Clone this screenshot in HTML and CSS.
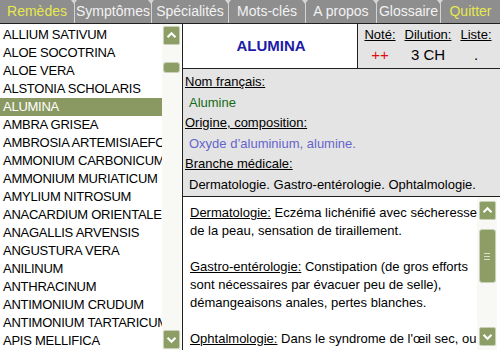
FILE: index.html
```html
<!DOCTYPE html>
<html lang="fr">
<head>
<meta charset="utf-8">
<title>Remèdes</title>
<link rel="stylesheet" href="styles.css">
</head>
<body>
<div class="app">
  <nav class="tabs">
    <div class="tab active">Remèdes</div>
    <div class="tab sep">Symptômes</div>
    <div class="tab sep">Spécialités</div>
    <div class="tab sep">Mots-clés</div>
    <div class="tab sep">A propos</div>
    <div class="tab sep">Glossaire</div>
    <div class="tab sep active">Quitter</div>
  </nav>
  <div class="main">
    <div class="list-panel">
      <ul class="list">
        <li>ALLIUM SATIVUM</li>
        <li>ALOE SOCOTRINA</li>
        <li>ALOE VERA</li>
        <li>ALSTONIA SCHOLARIS</li>
        <li class="selected">ALUMINA</li>
        <li>AMBRA GRISEA</li>
        <li>AMBROSIA ARTEMISIAEFOLIA</li>
        <li>AMMONIUM CARBONICUM</li>
        <li>AMMONIUM MURIATICUM</li>
        <li>AMYLIUM NITROSUM</li>
        <li>ANACARDIUM ORIENTALE</li>
        <li>ANAGALLIS ARVENSIS</li>
        <li>ANGUSTURA VERA</li>
        <li>ANILINUM</li>
        <li>ANTHRACINUM</li>
        <li>ANTIMONIUM CRUDUM</li>
        <li>ANTIMONIUM TARTARICUM</li>
        <li>APIS MELLIFICA</li>
      </ul>
      <div class="scrollbar list-scroll">
        <div class="sbtn"><svg viewBox="0 0 17 19" width="17" height="19"><path d="M4 11.5 L8.5 7 L13 11.5" fill="none" stroke="#fff" stroke-width="2.4"/></svg></div>
        <div class="thumb small"></div>
        <div class="track"></div>
        <div class="sbtn"><svg viewBox="0 0 17 19" width="17" height="19"><path d="M4 7.5 L8.5 12 L13 7.5" fill="none" stroke="#fff" stroke-width="2.4"/></svg></div>
      </div>
    </div>
    <div class="detail">
      <div class="head">
        <div class="name">ALUMINA</div>
        <div class="meta">
          <div class="col"><span class="lbl">Noté:</span><span class="val red">++</span></div>
          <div class="col"><span class="lbl">Dilution:</span><span class="val">3 CH</span></div>
          <div class="col"><span class="lbl">Liste:</span><span class="val">.</span></div>
        </div>
      </div>
      <div class="info">
        <div class="lbl">Nom français:</div>
        <div class="v green">Alumine</div>
        <div class="lbl">Origine, composition:</div>
        <div class="v violet">Oxyde d’aluminium, alumine.</div>
        <div class="lbl">Branche médicale:</div>
        <div class="v">Dermatologie. Gastro-entérologie. Ophtalmologie.</div>
      </div>
      <div class="desc">
        <div class="text">
          <p><span class="u">Dermatologie:</span> Eczéma lichénifié avec sécheresse de la peau, sensation de tiraillement.</p>
          <p><span class="u">Gastro-entérologie:</span> Constipation (de gros efforts sont nécessaires par évacuer peu de selle), démangeaisons anales, pertes blanches.</p>
          <p><span class="u">Ophtalmologie:</span> Dans le syndrome de l'œil sec, ou</p>
        </div>
        <div class="scrollbar desc-scroll">
          <div class="sbtn"><svg viewBox="0 0 17 19" width="17" height="19"><path d="M4 11.5 L8.5 7 L13 11.5" fill="none" stroke="#fff" stroke-width="2.4"/></svg></div>
          <div class="thumb big"><span></span><span></span><span></span></div>
          <div class="track"></div>
          <div class="sbtn"><svg viewBox="0 0 17 19" width="17" height="19"><path d="M4 7.5 L8.5 12 L13 7.5" fill="none" stroke="#fff" stroke-width="2.4"/></svg></div>
        </div>
      </div>
    </div>
  </div>
</div>
</body>
</html>
```
FILE: styles.css
```css
html, body {
  margin: 0;
  padding: 0;
}
body {
  width: 500px;
  height: 350px;
  overflow: hidden;
  background: #fff;
  font-family: "Liberation Sans", Arial, sans-serif;
  font-size: 13px;
  color: #000;
}
.app {
  width: 500px;
  height: 350px;
  display: flex;
  flex-direction: column;
}
.tabs {
  height: 23px;
  background: #8e8e8e;
  border-bottom: 1px solid #202020;
  display: grid;
  grid-template-columns: 74px 77px 77px 77px 71px 64px 1fr;
  flex: none;
}
.tab {
  position: relative;
  display: flex;
  align-items: center;
  justify-content: center;
  color: #f2f2f2;
  font-size: 14px;
  line-height: 23px;
}
.tab.active {
  color: #e6e84e;
}
.tab.sep {
  border-left: 1px solid #d4d4d4;
}
.tab.sep::before {
  content: "";
  position: absolute;
  left: -4px;
  top: 0;
  border-left: 3.5px solid transparent;
  border-right: 3.5px solid transparent;
  border-top: 4px solid #d4d4d4;
}
.main {
  flex: 1;
  display: grid;
  grid-template-columns: 183px 1fr;
  min-height: 0;
}
.list-panel {
  display: flex;
  border-right: 1px solid #202020;
  background: #fff;
  min-height: 0;
}
.list {
  list-style: none;
  margin: 0;
  padding: 2px 0 0 0;
  width: 162px;
  overflow: hidden;
}
.list li {
  height: 18px;
  line-height: 18px;
  padding-left: 3px;
  white-space: nowrap;
  overflow: hidden;
  letter-spacing: -0.25px;
}
.list li.selected {
  background: #8a9862;
  color: #fff;
}
.scrollbar {
  width: 19px;
  display: flex;
  flex-direction: column;
  align-items: center;
  background: #f8f8f4;
}
.list-scroll {
  padding: 2px 0 1px;
}
.sbtn {
  width: 17px;
  height: 19px;
  background: #8c9e66;
  border: 1px solid #c8d0b8;
  border-radius: 2px;
  box-sizing: border-box;
  display: flex;
  align-items: center;
  justify-content: center;
  flex: none;
}
.sbtn svg {
  display: block;
}
.thumb {
  width: 17px;
  background: #8c9e66;
  border: 1px solid #c8d0b8;
  border-radius: 3px;
  box-sizing: border-box;
  flex: none;
}
.thumb.small {
  height: 11px;
  margin-top: 17px;
}
.thumb.big {
  height: 54px;
  margin-top: 9px;
  display: flex;
  flex-direction: column;
  align-items: center;
  justify-content: center;
  gap: 2px;
}
.thumb.big span {
  width: 6px;
  height: 1px;
  background: #d8e0c8;
}
.track {
  flex: 1;
}
.detail {
  display: flex;
  flex-direction: column;
  min-height: 0;
}
.head {
  height: 45px;
  display: flex;
  border-bottom: 1px solid #202020;
  flex: none;
  box-sizing: border-box;
}
.name {
  width: 172px;
  background: #fff;
  border-right: 1px solid #202020;
  display: flex;
  align-items: center;
  justify-content: center;
  color: #1c1ca8;
  font-weight: bold;
  font-size: 15px;
  padding-left: 2px;
  padding-bottom: 1px;
}
.meta {
  flex: 1;
  background: #e4e4e4;
  display: flex;
  justify-content: space-around;
  padding: 3px 4px 0 2px;
}
.col {
  display: flex;
  flex-direction: column;
  align-items: center;
}
.col .lbl {
  text-decoration: underline;
  line-height: 16px;
}
.col .val {
  line-height: 24px;
  font-size: 15px;
}
.red {
  color: #e01010;
}
.info {
  height: 128px;
  background: #e4e4e4;
  border-bottom: 1px solid #202020;
  padding: 3px 0 0 2px;
  flex: none;
  box-sizing: border-box;
}
.info .lbl {
  text-decoration: underline;
  line-height: 20px;
  height: 20px;
}
.info .v {
  line-height: 20px;
  height: 20px;
  padding-top: 1px;
  padding-left: 4px;
}
.green {
  color: #156a15;
}
.violet {
  color: #6464cc;
}
.desc {
  flex: 1;
  display: flex;
  min-height: 0;
  background: #fff;
}
.text {
  flex: 1;
  padding: 7px 0 0 7px;
  overflow: hidden;
  line-height: 18px;
  font-size: 13px;
}
.text p {
  margin: 0 0 18px 0;
}
.u {
  text-decoration: underline;
}
.desc-scroll {
  width: 20px;
  padding: 4px 0 4px;
  margin-right: 3px;
}
```
